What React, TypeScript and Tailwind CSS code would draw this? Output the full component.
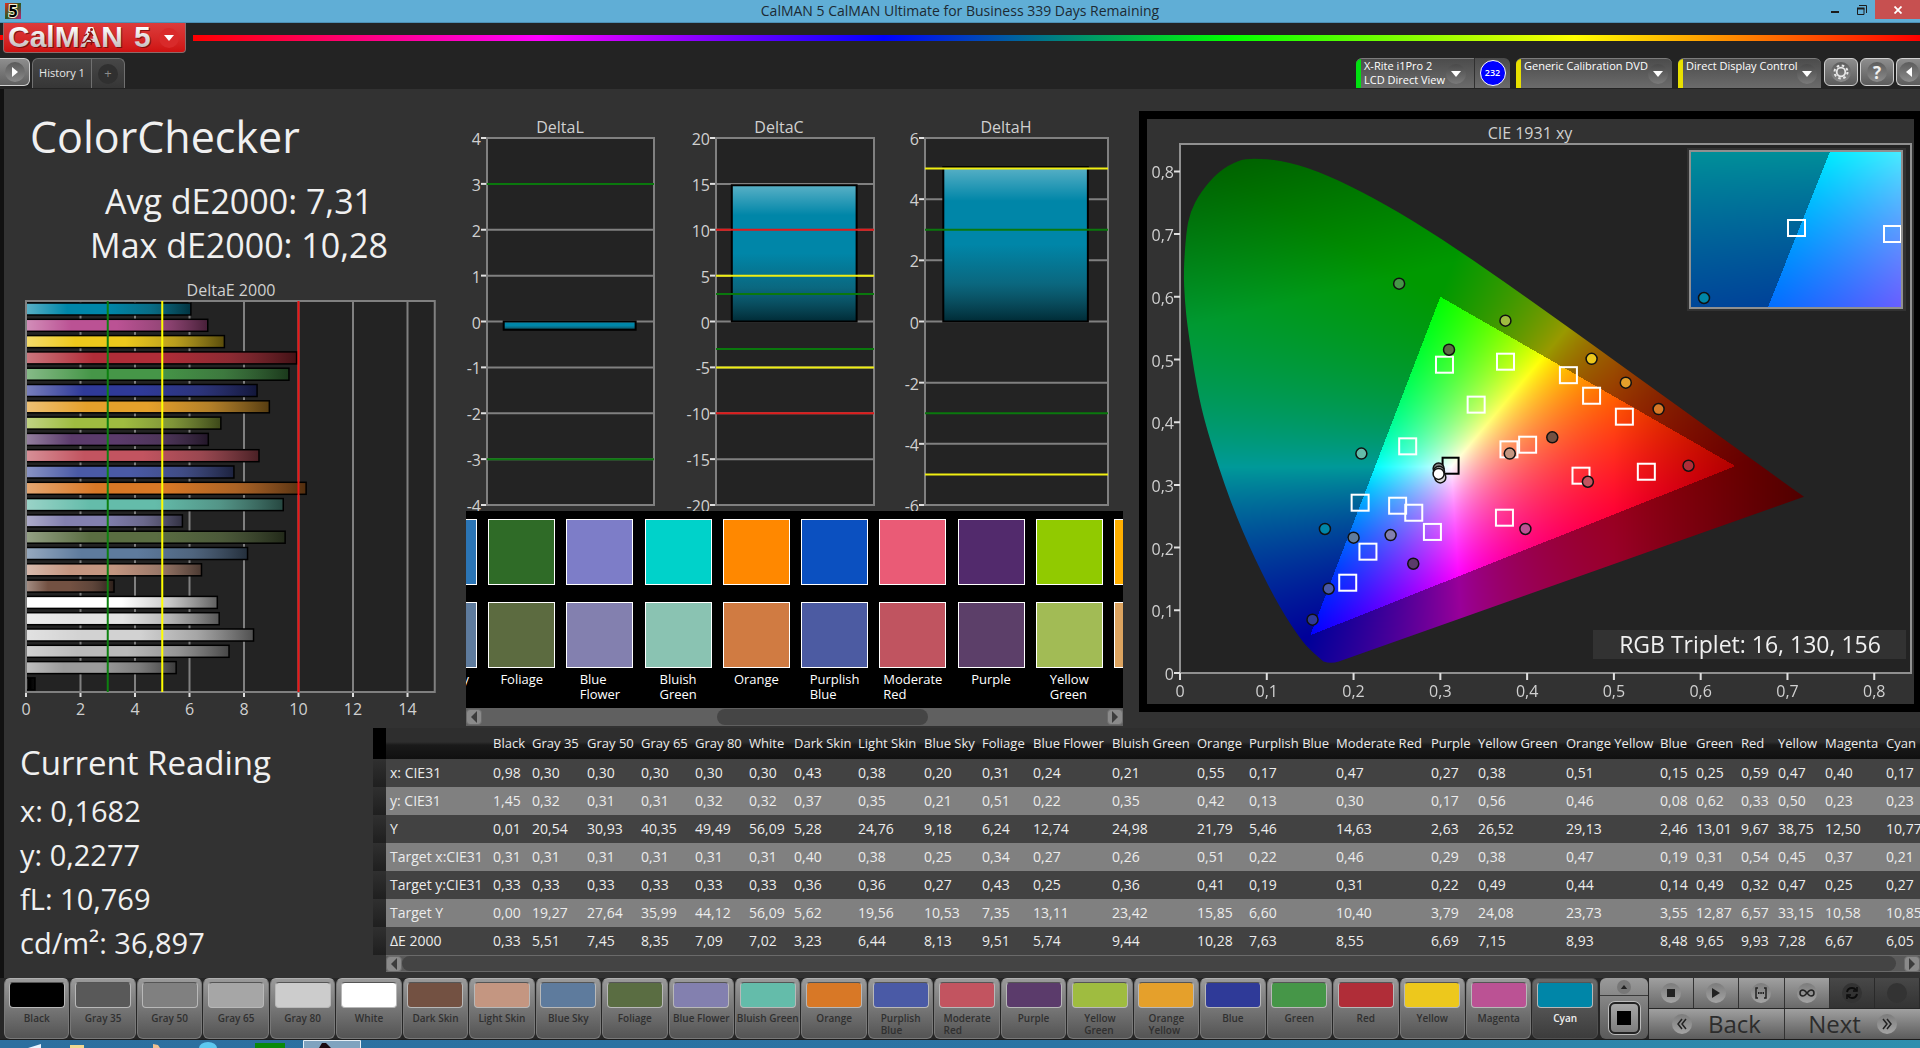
import { useLayoutEffect, useRef } from "react";
import type { ReactNode } from "react";

type Patch = {
  name: string;
  color: string;
  width: number;
  values: string[];
};

const patches: Patch[] = [
  { name: "Black", color: "#000000", width: 39, values: ["0,98", "1,45", "0,01", "0,31", "0,33", "0,00", "0,33"] },
  { name: "Gray 35", color: "#595959", width: 55, values: ["0,30", "0,32", "20,54", "0,31", "0,33", "19,27", "5,51"] },
  { name: "Gray 50", color: "#808080", width: 54, values: ["0,30", "0,31", "30,93", "0,31", "0,33", "27,64", "7,45"] },
  { name: "Gray 65", color: "#a6a6a6", width: 54, values: ["0,30", "0,31", "40,35", "0,31", "0,33", "35,99", "8,35"] },
  { name: "Gray 80", color: "#cccccc", width: 54, values: ["0,30", "0,32", "49,49", "0,31", "0,33", "44,12", "7,09"] },
  { name: "White", color: "#ffffff", width: 45, values: ["0,30", "0,32", "56,09", "0,31", "0,33", "56,09", "7,02"] },
  { name: "Dark Skin", color: "#735142", width: 64, values: ["0,43", "0,37", "5,28", "0,40", "0,36", "5,62", "3,23"] },
  { name: "Light Skin", color: "#c49681", width: 66, values: ["0,38", "0,35", "24,76", "0,38", "0,36", "19,56", "6,44"] },
  { name: "Blue Sky", color: "#5e7b9d", width: 58, values: ["0,20", "0,21", "9,18", "0,25", "0,27", "10,53", "8,13"] },
  { name: "Foliage", color: "#5a6d42", width: 51, values: ["0,31", "0,51", "6,24", "0,34", "0,43", "7,35", "9,51"] },
  { name: "Blue Flower", color: "#8380af", width: 79, values: ["0,24", "0,22", "12,74", "0,27", "0,25", "13,11", "5,74"] },
  { name: "Bluish Green", color: "#64bcaa", width: 85, values: ["0,21", "0,35", "24,98", "0,26", "0,36", "23,42", "9,44"] },
  { name: "Orange", color: "#d87826", width: 52, values: ["0,55", "0,42", "21,79", "0,51", "0,41", "15,85", "10,28"] },
  { name: "Purplish Blue", color: "#4a5aa6", width: 87, values: ["0,17", "0,13", "5,46", "0,22", "0,19", "6,60", "7,63"] },
  { name: "Moderate Red", color: "#c25460", width: 95, values: ["0,47", "0,30", "14,63", "0,46", "0,31", "10,40", "8,55"] },
  { name: "Purple", color: "#5b3b6b", width: 47, values: ["0,27", "0,17", "2,63", "0,29", "0,22", "3,79", "6,69"] },
  { name: "Yellow Green", color: "#9fbc40", width: 88, values: ["0,38", "0,56", "26,52", "0,38", "0,49", "24,08", "7,15"] },
  { name: "Orange Yellow", color: "#e5a02b", width: 94, values: ["0,51", "0,46", "29,13", "0,47", "0,44", "23,73", "8,93"] },
  { name: "Blue", color: "#2f3a98", width: 36, values: ["0,15", "0,08", "2,46", "0,19", "0,14", "3,55", "8,48"] },
  { name: "Green", color: "#469648", width: 45, values: ["0,25", "0,62", "13,01", "0,31", "0,49", "12,87", "9,65"] },
  { name: "Red", color: "#b02d38", width: 37, values: ["0,59", "0,33", "9,67", "0,54", "0,32", "6,57", "9,93"] },
  { name: "Yellow", color: "#edc81c", width: 47, values: ["0,47", "0,50", "38,75", "0,45", "0,47", "33,15", "7,28"] },
  { name: "Magenta", color: "#bb5294", width: 61, values: ["0,40", "0,23", "12,50", "0,37", "0,25", "10,58", "6,67"] },
  { name: "Cyan", color: "#0086a8", width: 52, values: ["0,17", "0,23", "10,77", "0,21", "0,27", "10,85", "6,05"] },
];

const rowLabels = ["x: CIE31", "y: CIE31", "Y", "Target x:CIE31", "Target y:CIE31", "Target Y", "ΔE 2000"];

/* ---------- Delta E bar chart ---------- */

const barColor: Record<string, string> = {
  "Gray 35": "#9b9b9b",
  "Gray 50": "#bababa",
  "Gray 65": "#d2d2d2",
  "Gray 80": "#e4e4e4",
};

function DeltaEChart() {
  const left = 22;
  const top = 27;
  const height = 391;
  const unit = 27.25;
  const bars = [...patches].reverse();
  const bottom = top + height;
  return (
    <svg viewBox="0 0 451 450" className="block w-full" role="img" aria-label="DeltaE 2000">
      <defs>
        <linearGradient id="shadeX" x1="0" x2="1" y1="0" y2="0">
          <stop offset="0" stopColor="#fff" stopOpacity="0.35" />
          <stop offset="0.25" stopColor="#fff" stopOpacity="0" />
          <stop offset="0.5" stopColor="#222" stopOpacity="0" />
          <stop offset="0.75" stopColor="#222" stopOpacity="0.25" />
          <stop offset="1" stopColor="#000" stopOpacity="0.62" />
        </linearGradient>
      </defs>
      <text x="227" y="22" fontSize="16" fill="#d0d0d0" textAnchor="middle">DeltaE 2000</text>
      <rect x={left} y={top} width={unit * 15} height={height} fill="#232323" />
      {[0, 2, 4, 6, 8, 10, 12, 14].map((v) => (
        <g key={v}>
          <path d={`M${left + v * unit} ${top}V${bottom}`} stroke="#808080" strokeWidth="2" />
          <path d={`M${left + v * unit} ${bottom}v5`} stroke="#e0e0e0" strokeWidth="2" />
          <text x={left + v * unit} y={bottom + 23} fontSize="16" fill="#d0d0d0" textAnchor="middle">{v}</text>
        </g>
      ))}
      {bars.map((p, i) => {
        const w = parseFloat(p.values[6].replace(",", ".")) * unit;
        const y = top + 2 + i * 16.3;
        return (
          <g key={p.name}>
            <rect x={left} y={y} width={w} height="12" fill={barColor[p.name] ?? p.color} />
            <rect x={left} y={y} width={w} height="12" fill="url(#shadeX)" stroke="#000" strokeWidth="1.5" />
          </g>
        );
      })}
      <rect x={left} y={top} width={unit * 15} height={height} fill="none" stroke="#808080" strokeWidth="2" />
      <path d={`M${left + 3 * unit} ${top}V${bottom}`} stroke="#0d8010" strokeWidth="2" />
      <path d={`M${left + 5 * unit} ${top}V${bottom}`} stroke="#ffff00" strokeWidth="2" />
      <path d={`M${left + 10 * unit} ${top}V${bottom}`} stroke="#ee1414" strokeWidth="2" />
    </svg>
  );
}

/* ---------- Delta L / C / H charts ---------- */

type DeltaProps = {
  title: string;
  x: number;
  width: number;
  titleX: number;
  max: number;
  step: number;
  value: number;
  limits: { at: number; color: string }[];
};

function DeltaChart({ title, x, width, titleX, max, step, value, limits }: DeltaProps) {
  const top = 26;
  const height = 367;
  const toY = (v: number) => top + ((max - v) / (2 * max)) * height;
  const ticks: number[] = [];
  for (let v = max; v >= -max; v -= step) ticks.push(v);
  const barX = x + width * 0.1;
  const barY = Math.min(toY(0), toY(value));
  const barH = Math.abs(toY(value) - toY(0));
  return (
    <g>
      <text x={titleX} y="21" fontSize="16" fill="#d0d0d0" textAnchor="middle">{title}</text>
      <rect x={x} y={top} width={width} height={height} fill="#232323" />
      {ticks.map((v) => (
        <g key={v}>
          <path d={`M${x} ${toY(v)}h${width}`} stroke="#808080" strokeWidth="2" />
          <path d={`M${x - 6} ${toY(v)}h6`} stroke="#e0e0e0" strokeWidth="2" />
          <text x={x - 6} y={toY(v) + 7} fontSize="16" fill="#d0d0d0" textAnchor="end">{v}</text>
        </g>
      ))}
      <rect x={barX} y={barY} width={width * 0.79} height={barH} fill="#0086a8" />
      <rect x={barX} y={barY} width={width * 0.79} height={barH} fill="url(#shadeY)" stroke="#000" strokeWidth="2" />
      <rect x={x} y={top} width={width} height={height} fill="none" stroke="#808080" strokeWidth="2" />
      {limits.map((l) => (
        <path key={l.at} d={`M${x} ${toY(l.at)}h${width}`} stroke={l.color} strokeWidth="2" />
      ))}
    </g>
  );
}

function DeltaCharts() {
  const green = "#0a780d";
  const yellow = "#f0ee12";
  const red = "#e01a1a";
  return (
    <svg viewBox="0 0 684 399" className="block w-full" role="img" aria-label="DeltaL, DeltaC and DeltaH">
      <defs>
        <linearGradient id="shadeY" x1="0" x2="0" y1="0" y2="1">
          <stop offset="0" stopColor="#fff" stopOpacity="0.35" />
          <stop offset="0.22" stopColor="#fff" stopOpacity="0" />
          <stop offset="0.5" stopColor="#222" stopOpacity="0" />
          <stop offset="0.75" stopColor="#222" stopOpacity="0.3" />
          <stop offset="1" stopColor="#000" stopOpacity="0.68" />
        </linearGradient>
      </defs>
      <DeltaChart title="DeltaL" x={32} width={167} titleX={105} max={4} step={1} value={-0.18}
        limits={[{ at: 3, color: green }, { at: -3, color: green }]} />
      <DeltaChart title="DeltaC" x={261} width={158} titleX={324} max={20} step={5} value={14.85}
        limits={[{ at: 10, color: red }, { at: 5, color: yellow }, { at: 3, color: green }, { at: -3, color: green }, { at: -5, color: yellow }, { at: -10, color: red }]} />
      <DeltaChart title="DeltaH" x={470} width={183} titleX={551} max={6} step={2} value={5.05}
        limits={[{ at: 5, color: yellow }, { at: 3, color: green }, { at: -3, color: green }, { at: -5, color: yellow }]} />
    </svg>
  );
}

/* ---------- Chromaticity diagram ---------- */

const locus: [number, number][] = [
  [0.1653, 0.0184], [0.1508, 0.0354], [0.139, 0.054], [0.116, 0.1018], [0.087, 0.179], [0.058, 0.272],
  [0.0307, 0.388], [0.019, 0.457], [0.0085, 0.553], [0.0055, 0.595], [0.004, 0.64], [0.007, 0.701],
  [0.0115, 0.735], [0.0234, 0.766], [0.0436, 0.799], [0.067, 0.818], [0.084, 0.821], [0.116, 0.818],
  [0.157, 0.802], [0.209, 0.768], [0.2658, 0.7243], [0.3374, 0.6589], [0.4087, 0.5896], [0.4788, 0.5202],
  [0.5448, 0.4544], [0.6029, 0.3965], [0.6482, 0.3514], [0.6801, 0.3197], [0.7079, 0.292], [0.719, 0.281],
];

const triangle: [number, number][] = [[0.64, 0.33], [0.3, 0.6], [0.15, 0.06]];

function inTriangle(x: number, y: number) {
  return triangle.every(([ax, ay], i) => {
    const [bx, by] = triangle[(i + 1) % 3];
    return (bx - ax) * (y - ay) - (by - ay) * (x - ax) >= 0;
  });
}

function chromaColor(x: number, y: number): [number, number, number] {
  const yy = Math.max(y, 0.002);
  const X = x / yy;
  const Z = (1 - x - yy) / yy;
  const lin = [
    3.2406 * X - 1.5372 - 0.4986 * Z,
    -0.9689 * X + 1.8758 + 0.0415 * Z,
    0.0557 * X - 0.204 + 1.057 * Z,
  ].map((v) => Math.max(v, 0));
  const peak = Math.max(...lin);
  let k = inTriangle(x, y) ? 1 : 0.6;
  const redEdge = x - 0.5;
  const greenEdge = y - 0.33 * x - 0.55;
  if (redEdge > 0) k *= 1 - redEdge * 2.2;
  if (greenEdge > 0) k *= 1 - greenEdge * 1.45;
  return lin.map((v) => (v / peak) * 255 * k) as [number, number, number];
}

type FieldProps = { width: number; height: number; x0: number; x1: number; y0: number; y1: number; clipToLocus?: boolean };

function ChromaField({ width, height, x0, x1, y0, y1, clipToLocus }: FieldProps) {
  const ref = useRef<HTMLCanvasElement>(null);
  useLayoutEffect(() => {
    const ctx = ref.current?.getContext("2d");
    if (!ctx) return;
    const image = ctx.createImageData(width, height);
    for (let j = 0; j < height; j++) {
      for (let i = 0; i < width; i++) {
        const x = x0 + ((i + 0.5) / width) * (x1 - x0);
        const y = y1 - ((j + 0.5) / height) * (y1 - y0);
        const c = chromaColor(x, y);
        const o = (j * width + i) * 4;
        image.data[o] = c[0];
        image.data[o + 1] = c[1];
        image.data[o + 2] = c[2];
        image.data[o + 3] = 255;
      }
    }
    ctx.putImageData(image, 0, 0);
    if (!clipToLocus) return;
    const px = (p: [number, number]): [number, number] => [
      ((p[0] - x0) / (x1 - x0)) * width,
      ((y1 - p[1]) / (y1 - y0)) * height,
    ];
    ctx.globalCompositeOperation = "destination-in";
    ctx.beginPath();
    ctx.moveTo(...px([0.183, 0.0184]));
    ctx.quadraticCurveTo(...px([0.174, 0.0145]), ...px(locus[0]));
    for (let i = 1; i < locus.length - 1; i++) {
      const mid: [number, number] = [(locus[i][0] + locus[i + 1][0]) / 2, (locus[i][1] + locus[i + 1][1]) / 2];
      ctx.quadraticCurveTo(...px(locus[i]), ...px(mid));
    }
    ctx.lineTo(...px(locus[locus.length - 1]));
    ctx.closePath();
    ctx.fill();
    ctx.globalCompositeOperation = "source-over";
  }, [width, height, x0, x1, y0, y1, clipToLocus]);
  return <canvas ref={ref} width={width} height={height} className="block" />;
}

const targets: [number, number][] = [
  [0.3042, 0.4917], [0.3745, 0.4965], [0.3407, 0.428], [0.447, 0.475], [0.4737, 0.4422], [0.5115, 0.4088],
  [0.2618, 0.3615], [0.3785, 0.3567], [0.4, 0.3641], [0.4615, 0.3147], [0.5368, 0.321], [0.207, 0.2716],
  [0.2502, 0.2668], [0.2688, 0.2556], [0.2903, 0.225], [0.3733, 0.2477], [0.216, 0.1935], [0.1927, 0.144],
];

const measured: [number, number, string][] = [
  [0.2525, 0.621, "#469648"], [0.375, 0.562, "#9fbc40"], [0.31, 0.5156, "#5a6d42"], [0.4743, 0.501, "#edc81c"],
  [0.5137, 0.463, "#e5a02b"], [0.5515, 0.421, "#d87826"], [0.209, 0.35, "#64bcaa"], [0.429, 0.3758, "#735142"],
  [0.38, 0.35, "#c49681"], [0.586, 0.3306, "#b02d38"], [0.47, 0.305, "#c25460"], [0.167, 0.2297, "#0086a8"],
  [0.2, 0.2158, "#5e7b9d"], [0.2427, 0.22, "#8380af"], [0.398, 0.2297, "#bb5294"], [0.2688, 0.1743, "#5b3b6b"],
  [0.1713, 0.1344, "#4a5aa6"], [0.1527, 0.085, "#2f3a98"], [0.298, 0.326, "#808080"], [0.2985, 0.321, "#a6a6a6"],
  [0.3, 0.312, "#d8d8d8"], [0.298, 0.3175, "#ffffff"],
];

function CieChart() {
  const left = 33;
  const bottom = 554;
  const plotW = 731;
  const plotH = 529;
  const ux = 867.8;
  const uy = 627;
  const toX = (x: number) => left + x * ux;
  const toY = (y: number) => bottom - y * uy;
  const ticks = ["0", "0,1", "0,2", "0,3", "0,4", "0,5", "0,6", "0,7", "0,8"];
  return (
    <svg viewBox="0 0 767 585" className="block w-full bg-[#323232]" role="img" aria-label="CIE 1931 xy chromaticity">
      <text x="383" y="20" fontSize="16" fill="#d0d0d0" textAnchor="middle">CIE 1931 xy</text>
      <rect x={left} y={bottom - plotH} width={plotW} height={plotH} fill="#232323" />
      <foreignObject x={left} y={bottom - plotH} width={plotW} height={plotH}>
        <ChromaField width={plotW} height={plotH} x0={0} x1={plotW / ux} y0={0} y1={plotH / uy} clipToLocus />
      </foreignObject>
      <rect x={left} y={bottom - plotH} width={plotW} height={plotH} fill="none" stroke="#909090" strokeWidth="2" />
      {ticks.map((t, i) => (
        <g key={t} fontSize="16" fill="#d0d0d0">
          <path d={`M${toX(i / 10)} ${bottom}v7M${left} ${toY(i / 10)}h-6`} stroke="#e0e0e0" strokeWidth="2" />
          <text x={toX(i / 10)} y={bottom + 24} textAnchor="middle">{t}</text>
          <text x={left - 6} y={toY(i / 10) + 7} textAnchor="end">{t}</text>
        </g>
      ))}
      {targets.map(([x, y]) => (
        <rect key={`${x}-${y}`} x={toX(x) - 8} y={toY(y) - 8} width="17" height="16" fill="none" stroke="#fff" strokeWidth="2" />
      ))}
      <rect x={toX(0.3118) - 8} y={toY(0.3306) - 8} width="16" height="16" fill="none" stroke="#000" strokeWidth="2" />
      {measured.map(([x, y, c]) => (
        <circle key={`${x}-${y}`} cx={toX(x)} cy={toY(y)} r="5.5" fill={c} stroke="#111" strokeWidth="1.5" />
      ))}
      <rect x="540" y="29" width="219" height="163" fill="#323232" />
      <foreignObject x="543" y="32" width="212" height="157">
        <ChromaField width={212} height={157} x0={0.161} x1={0.2532} y0={0.221} y1={0.3191} />
      </foreignObject>
      <svg x="543" y="32" width="212" height="157">
        <rect x="98" y="69" width="17" height="16" fill="none" stroke="#fff" strokeWidth="2" />
        <rect x="194" y="75" width="17" height="16" fill="none" stroke="#fff" strokeWidth="2" />
        <circle cx="14" cy="147" r="5.5" fill="#0086a8" stroke="#111" strokeWidth="1.5" />
      </svg>
      <rect x="543" y="32" width="212" height="157" fill="none" stroke="#909090" strokeWidth="2" />
      <rect x="446" y="511" width="313" height="29" fill="#323232" />
      <text x="603" y="534" fontSize="23" fill="#f0f0f0" textAnchor="middle">RGB Triplet: 16, 130, 156</text>
    </svg>
  );
}

/* ---------- Swatch comparison strip ---------- */

const swatches = [
  { label: ["Blue Sky"], measured: "#2b75b5", target: "#5e7b9d" },
  { label: ["Foliage"], measured: "#2f6b27", target: "#5c6b40" },
  { label: ["Blue", "Flower"], measured: "#7d7dc8", target: "#8380af" },
  { label: ["Bluish", "Green"], measured: "#00d2ca", target: "#8ac3b2" },
  { label: ["Orange"], measured: "#ff8800", target: "#d07b42" },
  { label: ["Purplish", "Blue"], measured: "#0b50c0", target: "#4c5ba2" },
  { label: ["Moderate", "Red"], measured: "#ea5b76", target: "#c05460" },
  { label: ["Purple"], measured: "#522a6c", target: "#5c3f69" },
  { label: ["Yellow", "Green"], measured: "#91ca00", target: "#a2bb55" },
  { label: ["Orange", "Yellow"], measured: "#ffae00", target: "#dca35f" },
];

function ScrollArrow({ dir }: { dir: "left" | "right" }) {
  return (
    <button
      type="button"
      aria-label={`Scroll ${dir}`}
      className="flex h-4 w-4 shrink-0 items-center justify-center rounded-sm border border-[#6c6c6c] bg-[#8a8a8a]"
    >
      <svg viewBox="0 0 8 12" className="h-3 w-2">
        <path d={dir === "left" ? "M7 0v12L1 6z" : "M1 0v12l6-6z"} fill="#3c3c3c" />
      </svg>
    </button>
  );
}

function SwatchStrip() {
  return (
    <div className="mr-4 ml-[11px]">
      <div className="h-[197px] overflow-hidden bg-black pt-2">
        <ul className="-mr-[58px] -ml-14 flex justify-between">
          {swatches.map((s) => (
            <li key={s.label.join(" ")} className="flex w-[67px] shrink-0 flex-col items-center">
              <span className="h-[66px] w-full border border-white" style={{ backgroundColor: s.measured }} />
              <span className="mt-[17px] h-[66px] w-full border border-white" style={{ backgroundColor: s.target }} />
              <span className="mt-1 text-[13px] leading-[15px] whitespace-nowrap text-white">
                {s.label.map((l) => (
                  <span key={l} className="block">{l}</span>
                ))}
              </span>
            </li>
          ))}
        </ul>
      </div>
      <div className="flex h-[18px] items-center bg-[#606060]">
        <ScrollArrow dir="left" />
        <div className="grid h-4 flex-1 grid-cols-[235fr_211fr_179fr]">
          <span className="col-start-2 rounded-lg bg-[#454545]" />
        </div>
        <ScrollArrow dir="right" />
      </div>
    </div>
  );
}

/* ---------- Results table ---------- */

function ResultsTable() {
  return (
    <div className="flex min-w-0 flex-1">
      <div className="w-[13px] shrink-0">
        <div className="h-[31px] bg-black" />
        {rowLabels.map((r) => (
          <div key={r} className="h-7 bg-linear-to-b from-[#303030] to-[#1f1f1f]" />
        ))}
      </div>
      <div className="min-w-0 flex-1">
        <div className="overflow-hidden">
          <table className="w-full table-fixed border-collapse text-left whitespace-nowrap text-[#ececec]">
            <colgroup>
              <col className="w-[103px]" />
              {patches.map((p) => (
                <col key={p.name} style={{ width: p.width }} />
              ))}
            </colgroup>
            <thead>
              <tr className="h-[31px] bg-linear-to-b from-[#2e2e2e] from-45% via-[#1a1a1a] via-55% to-[#101010] text-[13px]">
                <th className="p-0" aria-label="Measurement" />
                {patches.map((p) => (
                  <th key={p.name} scope="col" className="p-0 pl-1 font-normal">{p.name}</th>
                ))}
              </tr>
            </thead>
            <tbody className="text-sm leading-5">
              {rowLabels.map((label, r) => (
                <tr key={label} className="h-7 odd:bg-[#424242] even:bg-[#808080]">
                  <th scope="row" className="p-0 pl-1 font-normal">{label}</th>
                  {patches.map((p) => (
                    <td key={p.name} className="p-0 pl-1">{p.values[r]}</td>
                  ))}
                </tr>
              ))}
            </tbody>
          </table>
        </div>
        <div className="flex h-[17px] items-center border-y border-[#6a6a6a] bg-[#5a5a5a]">
          <ScrollArrow dir="left" />
          <span className="mr-2 h-[15px] flex-1 rounded-lg bg-[#444444]" />
          <ScrollArrow dir="right" />
        </div>
      </div>
    </div>
  );
}

/* ---------- Header ---------- */

function RoundArrow() {
  return (
    <span className="flex size-5 shrink-0 items-center justify-center rounded-full bg-linear-to-b from-[#4a4a4a] to-[#7a7a7a]">
      <svg viewBox="0 0 10 6" className="h-1.5 w-2.5"><path d="M0 0h10L5 6z" fill="#fff" /></svg>
    </span>
  );
}

function DeviceButton({ lines, bar, className }: { lines: string[]; bar: string; className: string }) {
  return (
    <button
      type="button"
      className={`flex h-[30px] items-center overflow-hidden border-t border-[#7c7c7c] bg-linear-to-b from-[#4c4c4c] to-[#6b6b6b] text-left text-[11px] leading-[14px] whitespace-nowrap text-white ${className}`}
    >
      <span className={`h-full w-[5px] shrink-0 ${bar}`} />
      <span className="flex h-full min-w-0 flex-1 flex-col pl-[3px]">
        {lines.map((l) => (
          <span key={l}>{l}</span>
        ))}
      </span>
      <RoundArrow />
    </button>
  );
}

function SquareButton({ label, children, className }: { label: string; children: ReactNode; className: string }) {
  return (
    <button
      type="button"
      aria-label={label}
      className={`flex h-7 shrink-0 items-center justify-center border border-[#d0d0d0] bg-linear-to-b from-[#8e8e8e] to-[#5c5c5c] ${className}`}
    >
      <span className="flex size-5 shrink-0 items-center justify-center rounded-full bg-linear-to-b from-[#5c5c5c] to-[#8c8c8c] text-[17px] leading-none font-bold text-[#f0f0f0]">
        {children}
      </span>
    </button>
  );
}

function TitleBar() {
  return (
    <header className="grid h-[23px] grid-cols-[1fr_auto_1fr] items-center border-b border-[#4d90b5] bg-[#60aed6]">
      <svg viewBox="0 0 16 16" className="ml-[5px] size-4">
        <defs>
          <linearGradient id="appIcon" x1="0" x2="1" y1="0" y2="1">
            <stop offset="0" stopColor="#e03020" />
            <stop offset="0.5" stopColor="#2a5a20" />
            <stop offset="1" stopColor="#c0207a" />
          </linearGradient>
        </defs>
        <rect width="16" height="16" fill="url(#appIcon)" />
        <text x="8" y="14" fontSize="16" fontWeight="bold" textAnchor="middle" fill="#000" stroke="#f5f0d0" strokeWidth="2" paintOrder="stroke">5</text>
      </svg>
      <h1 className="text-sm text-[#1c2a33]">CalMAN 5 CalMAN Ultimate for Business 339 Days Remaining</h1>
      <div className="flex h-full items-start justify-end">
        <button type="button" aria-label="Minimize" className="flex h-[19px] w-[26px] items-end justify-center pb-1.5">
          <span className="h-0.5 w-2 bg-[#1c1c1c]" />
        </button>
        <button type="button" aria-label="Restore" className="flex h-[19px] w-[27px] items-center justify-center">
          <svg viewBox="0 0 10 10" className="size-2.5" fill="none" stroke="#1c1c1c">
            <path d="M2 .5h7.500v7.500" />
            <path d="M.5 3.500h6.500v6h-6.500z" />
            <path d="M0 3.500h7.500" strokeWidth="2" />
          </svg>
        </button>
        <button type="button" aria-label="Close" className="flex h-[19px] w-[45px] items-center justify-center bg-[#c75050]">
          <svg viewBox="0 0 8 8" className="size-2" stroke="#fff" strokeWidth="1.800"><path d="M.5.5l7 7M7.500.5l-7 7" /></svg>
        </button>
      </div>
    </header>
  );
}

function AppHeader() {
  return (
    <div className="bg-[#232323]">
      <div className="flex h-[35px] items-start">
        <span className="mt-3 h-[5px] w-[3px] shrink-0 bg-[#ff0000]" />
        <button
          type="button"
          aria-label="CalMAN 5 menu"
          className="flex h-[30px] w-[183px] shrink-0 items-center justify-between rounded-b-[4px] border border-t-0 border-[#8c6a6a] bg-linear-to-b from-[#dc3b3b] to-[#cf1010] pr-1.5 pl-1"
        >
          <svg viewBox="0 0 148 30" className="h-[30px] w-[148px]">
            <defs>
              <linearGradient id="silver" x1="0" x2="0" y1="0" y2="1">
                <stop offset="0.2" stopColor="#ffffff" />
                <stop offset="0.9" stopColor="#c0b8b8" />
              </linearGradient>
            </defs>
            <g fontFamily="'Liberation Sans', sans-serif" fontWeight="bold" fontSize="30">
              <g fill="#5c0808" opacity="0.7">
                <text x="1" y="25">CalMAN</text>
                <text x="127" y="25">5</text>
              </g>
              <g fill="url(#silver)">
                <text x="0" y="24">CalMAN</text>
                <text x="126" y="24">5</text>
              </g>
            </g>
            <path d="M80 9l3 1 2 3M83 10l-3 5 4 3-1 4M80 15l-3 4-3 1M79 11l-3 2" stroke="#8c1212" strokeWidth="1.400" fill="none" />
            <circle cx="83.500" cy="6.500" r="1.500" fill="#8c1212" />
          </svg>
          <span className="flex size-5 items-center justify-center rounded-full bg-[#d92a2a]">
            <svg viewBox="0 0 10 6" className="h-1.5 w-2.5"><path d="M0 0h10L5 6z" fill="#fff" /></svg>
          </span>
        </button>
        <span className="mt-3 ml-[7px] h-[6px] flex-1 bg-[linear-gradient(to_right,#ff0000,#ff00ff,#0000ff,#00ff00,#ffff00,#ff0000)]" />
      </div>
      <div className="flex h-[31px] items-start">
        <button
          type="button"
          aria-label="Expand panel"
          className="flex h-7 w-[30px] items-center justify-center rounded-r-md border border-l-0 border-[#d0d0d0] bg-linear-to-b from-[#8e8e8e] to-[#606060]"
        >
          <span className="flex size-5 items-center justify-center rounded-full bg-linear-to-b from-[#5a5a5a] to-[#8a8a8a]">
            <svg viewBox="0 0 6 10" className="h-2.5 w-1.5"><path d="M0 0v10l6-5z" fill="#fff" /></svg>
          </span>
        </button>
        <div className="ml-0.5 flex h-[30px] overflow-hidden rounded-t-md border border-b-0 border-[#707070] bg-linear-to-b from-[#474747] to-[#363636]" role="tablist">
          <button type="button" role="tab" aria-selected="true" className="w-[58px] text-[11px] text-[#e8e8e8]">History 1</button>
          <button type="button" aria-label="Add history" className="flex w-[33px] items-center justify-center border-l border-[#707070]">
            <span className="flex size-5 items-center justify-center rounded-full bg-[#303030] text-[13px] text-[#8a8a8a]">+</span>
          </button>
        </div>
        <div className="ml-auto flex items-start">
          <DeviceButton lines={["X-Rite i1Pro 2", "LCD Direct View"]} bar="bg-[#00e010]" className="w-[118px] rounded-tl-md pr-2" />
          <div className="flex h-[30px] w-9 items-center justify-center rounded-tr-md border-l border-[#303030] bg-linear-to-b from-[#4c4c4c] to-[#6b6b6b]">
            <span className="flex size-[26px] items-center justify-center rounded-full border border-white bg-[#0000ff] text-[9px] font-semibold text-white">232</span>
          </div>
          <DeviceButton lines={["Generic Calibration DVD"]} bar="bg-[#e8e000]" className="ml-1.5 w-[156px] rounded-t-md pr-1" />
          <DeviceButton lines={["Direct Display Control"]} bar="bg-[#e8e000]" className="ml-1.5 w-[143px] rounded-t-md pr-1" />
          <SquareButton label="Settings" className="ml-[3px] w-[34px] rounded-md">
            <svg viewBox="0 0 16 16" className="size-4" fill="none" stroke="#e8e8e8">
              <circle cx="8" cy="8" r="4.300" strokeWidth="1.800" />
              <circle cx="8" cy="8" r="6.500" strokeWidth="2" strokeDasharray="2.550 2.550" />
            </svg>
          </SquareButton>
          <SquareButton label="Help" className="ml-0.5 w-[34px] rounded-md">?</SquareButton>
          <SquareButton label="Collapse panel" className="ml-0.5 w-6 rounded-l-md border-r-0">
            <svg viewBox="0 0 6 10" className="h-2.5 w-1.5"><path d="M6 0v10L0 5z" fill="#fff" /></svg>
          </SquareButton>
        </div>
      </div>
    </div>
  );
}

/* ---------- Bottom bar ---------- */

function splitLabel(name: string) {
  const twoLine = ["Purplish Blue", "Moderate Red", "Yellow Green", "Orange Yellow"];
  return twoLine.includes(name) ? name.split(" ") : [name];
}

function PatchButton({ patch, active }: { patch: Patch; active: boolean }) {
  return (
    <button
      type="button"
      aria-pressed={active}
      className={
        active
          ? "flex min-w-0 flex-1 flex-col items-center rounded-md border border-[#505050] bg-linear-to-b from-[#6a6a6a] to-[#3c3c3c] pt-[3px] text-[#f0f0f0]"
          : "flex min-w-0 flex-1 flex-col items-center rounded-md border border-t-[#b0b0b0] border-[#787878] bg-linear-to-b from-[#9a9a9a] to-[#545454] pt-[3px] text-[#303030]"
      }
    >
      <span
        className="h-[26px] w-[56px] rounded-[4px] border border-t-[#555555] border-[#b8b8b8]"
        style={{ backgroundColor: patch.color }}
      />
      <span className="mt-1 text-left text-[10px] leading-3 font-semibold whitespace-nowrap">
        {splitLabel(patch.name).map((l) => (
          <span key={l} className="block">{l}</span>
        ))}
      </span>
    </button>
  );
}

function Knob({ children, dark }: { children?: ReactNode; dark?: boolean }) {
  return (
    <span
      className={
        dark
          ? "flex size-5 shrink-0 items-center justify-center rounded-full bg-[#333333]"
          : "flex size-5 shrink-0 items-center justify-center rounded-full bg-linear-to-b from-[#7c7c7c] to-[#a4a4a4]"
      }
    >
      {children}
    </span>
  );
}

const lightCell = "flex flex-1 items-center justify-center border-r border-[#333333] bg-linear-to-b from-[#a0a0a0] to-[#6a6a6a]";
const darkCell = "flex flex-1 items-center justify-center border-r border-[#2a2a2a] bg-linear-to-b from-[#484848] to-[#333333]";
const navCell = "flex flex-1 items-center justify-center gap-4 bg-linear-to-b from-[#a0a0a0] to-[#5c5c5c] text-2xl leading-none font-medium text-[#2c2c2c]";

function Transport() {
  return (
    <div className="flex w-[271px] shrink-0 flex-col gap-px">
      <div className="flex h-[30px]">
        <button type="button" aria-label="Stop" className={lightCell}>
          <Knob><span className="size-2 bg-[#222222]" /></Knob>
        </button>
        <button type="button" aria-label="Read" className={lightCell}>
          <Knob><svg viewBox="0 0 8 10" className="h-2.5 w-2"><path d="M0 0v10l8-5z" fill="#222" /></svg></Knob>
        </button>
        <button type="button" aria-label="Read series" className={lightCell}>
          <Knob>
            <svg viewBox="0 0 14 12" className="h-3 w-3.5" fill="none" stroke="#222" strokeWidth="1.500">
              <path d="M4 1H2v10h2M10 1h2v10h-2" />
              <path d="M4 6h6" strokeWidth="2" strokeDasharray="1.500 .8" />
            </svg>
          </Knob>
        </button>
        <button type="button" aria-label="Read continuous" className={lightCell}>
          <Knob>
            <svg viewBox="0 0 16 8" className="h-2 w-4" fill="none" stroke="#222" strokeWidth="1.500">
              <path d="M8 4C6 1.500 5 1 4 1a3 3 0 000 6c1 0 2-.5 4-3s3-3 4-3a3 3 0 010 6c-1 0-2-.5-4-3z" />
            </svg>
          </Knob>
        </button>
        <button type="button" aria-label="Repeat" className={darkCell}>
          <Knob dark>
            <svg viewBox="0 0 14 14" className="size-3.5" fill="none" stroke="#0c0c0c" strokeWidth="2">
              <path d="M2 6c.5-2.500 2.500-4 5-4 1.500 0 3 .7 4 2M12 8c-.5 2.500-2.500 4-5 4-1.500 0-3-.7-4-2" />
              <path d="M12 1v4H8M2 13V9h4" strokeWidth="1.500" />
            </svg>
          </Knob>
        </button>
        <button type="button" aria-label="Record" className={darkCell}>
          <Knob dark />
        </button>
      </div>
      <div className="flex h-[30px]">
        <button type="button" className={`${navCell} border-r border-[#333333]`}>
          <Knob>
            <svg viewBox="0 0 12 12" className="size-3" fill="none" stroke="#222" strokeWidth="1.500"><path d="M6 1L2 6l4 5M10 1L6 6l4 5" /></svg>
          </Knob>
          Back
        </button>
        <button type="button" className={navCell}>
          Next
          <Knob>
            <svg viewBox="0 0 12 12" className="size-3" fill="none" stroke="#222" strokeWidth="1.500"><path d="M2 1l4 5-4 5M6 1l4 5-4 5" /></svg>
          </Knob>
        </button>
      </div>
    </div>
  );
}

function BottomBar() {
  return (
    <div className="flex h-[61px] bg-[#262626] pl-1">
      <div className="flex min-w-0 flex-1 gap-px">
        {patches.map((p) => (
          <PatchButton key={p.name} patch={p} active={p.name === "Cyan"} />
        ))}
      </div>
      <div className="mr-px ml-0.5 flex w-12 shrink-0 flex-col rounded-md bg-linear-to-b from-[#9a9a9a] to-[#5a5a5a]">
        <button type="button" aria-label="Show more" className="flex h-[18px] items-center justify-center border-b border-[#3a3a3a]">
          <span className="flex size-3.5 items-center justify-center rounded-full bg-[#777777]">
            <svg viewBox="0 0 8 5" className="h-1 w-2"><path d="M0 5h8L4 0z" fill="#222" /></svg>
          </span>
        </button>
        <button
          type="button"
          aria-label="Pattern window"
          className="mx-auto mt-[6px] flex h-8 w-[31px] items-center justify-center rounded-md border-2 border-[#222222] bg-linear-to-b from-[#a8a8a8] to-[#7c7c7c] ring-1 ring-[#bbbbbb]"
        >
          <span className="size-3.5 bg-black" />
        </button>
      </div>
      <Transport />
    </div>
  );
}

function TaskbarEdge() {
  return (
    <div className="h-[9px] overflow-hidden border-t border-[#1c1c1c] bg-linear-to-r from-[#2c6f9f] via-[#2a74a4] via-55% to-[#2f8fae]">
      <svg viewBox="0 0 420 8" className="h-2 w-[420px]">
        <path d="M28 8l13-4v4z" fill="#e8f4ff" />
        <path d="M70 5h14v3h-14z" fill="#f0d890" />
        <path d="M153 4l5 1 2 3h-7z" fill="#f0c090" />
        <path d="M199 8a9 6 0 0118 0z" fill="#5cc8f0" />
        <path d="M255 3h30v5h-30z" fill="#0a8a0a" />
        <path d="M303.500 8V.5h57V8" fill="#7fa3bf" stroke="#e4eef5" />
        <path d="M319 8l3-5h4l5 5z" fill="#1a0a10" />
      </svg>
    </div>
  );
}

export default function App() {
  const readings = ["x: 0,1682", "y: 0,2277", "fL: 10,769", "cd/m²: 36,897"];
  return (
    <div className="flex min-h-screen flex-col overflow-hidden bg-[#232323] font-['Open_Sans','Noto_Sans',sans-serif]">
      <TitleBar />
      <AppHeader />
      <main className="flex flex-1 flex-col border-l-4 border-[#111111] bg-[#323232]">
        <div className="grid grid-cols-[451fr_684fr_781fr] items-start">
          <section className="pt-5 text-[#f0f0f0]">
            <h2 className="pl-[26px] text-[43px] leading-14">ColorChecker</h2>
            <div className="mt-3.5 pl-[19px] text-center text-[34px] leading-11">
              <p>Avg dE2000: 7,31</p>
              <p>Max dE2000: 10,28</p>
            </div>
            <div className="mt-[7px]"><DeltaEChart /></div>
          </section>
          <section className="pt-[23px]">
            <DeltaCharts />
            <SwatchStrip />
          </section>
          <section className="mt-[22px] border-8 border-r-6 border-black">
            <CieChart />
          </section>
        </div>
        <div className="mb-1.5 flex pt-0.5">
          <section className="w-[369px] shrink-0 pt-[13px] pl-4 text-[#f0f0f0]">
            <h2 className="text-[33px] leading-11">Current Reading</h2>
            <div className="mt-1 text-[29px] leading-11">
              {readings.map((r) => (
                <p key={r}>{r}</p>
              ))}
            </div>
          </section>
          <ResultsTable />
        </div>
      </main>
      <BottomBar />
      <TaskbarEdge />
    </div>
  );
}
